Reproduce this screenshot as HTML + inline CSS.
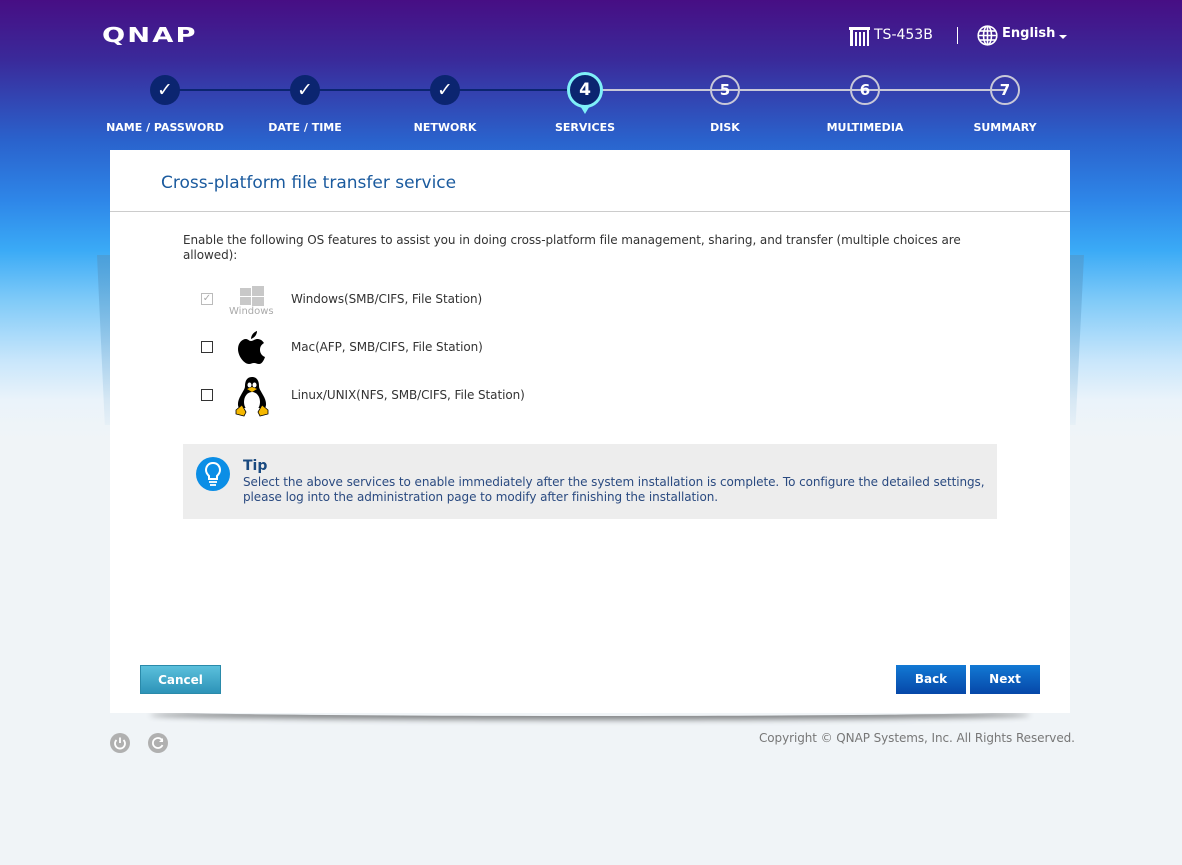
<!DOCTYPE html>
<html><head><meta charset="utf-8"><style>
*{margin:0;padding:0;box-sizing:border-box}
body{width:1182px;height:865px;overflow:hidden;font-family:"DejaVu Sans","Liberation Sans",sans-serif;position:relative;
background:linear-gradient(to bottom,#470e84 0px,#3a2a9a 60px,#2a62cc 140px,#2e86e8 200px,#3aaaf6 250px,#7fcaf8 300px,#c8e6fb 360px,#eaf3fa 400px,#f0f4f7 440px,#f0f4f7 100%);}
.abs{position:absolute}
.logo{left:102px;top:24px;color:#fff;font:900 26px "DejaVu Sans",sans-serif;letter-spacing:2px;transform:scale(1.05,0.78);transform-origin:top left}
.top{color:#fff;font-size:14px}
.line{height:2px;top:89px}
.c{width:30px;height:30px;border-radius:50%;top:75px;color:#fff;font:bold 15px "DejaVu Sans",sans-serif;text-align:center;line-height:30px}
.done{background:#0b2570;font-size:19px}
.fut{border:2px solid #c8c8d8;line-height:26px;background:transparent}
.lab{top:121px;color:#fff;font:bold 11px "DejaVu Sans",sans-serif;width:160px;text-align:center}
.card{left:110px;top:150px;width:960px;height:563px;background:#fff}
.side{background:linear-gradient(to bottom,rgba(80,150,200,.6),rgba(200,225,240,.2))}
.btn{height:29px;color:#fff;font:bold 12px "DejaVu Sans",sans-serif;text-align:center;line-height:29px}
.cb{width:12px;height:12px;border:1px solid #333;background:#fff}
.txt{font-size:12px;color:#333;letter-spacing:-0.08px}
</style></head><body>
<div class="abs side" style="left:97px;top:255px;width:13px;height:170px;clip-path:polygon(0 0,100% 0,100% 100%,60% 100%)"></div>
<div class="abs side" style="left:1070px;top:255px;width:14px;height:170px;clip-path:polygon(0 0,100% 0,40% 100%,0 100%)"></div>
<div class="abs logo">QNAP</div>
<svg class="abs" style="left:849px;top:27px" width="21" height="19" viewBox="0 0 21 19"><rect x="0" y="0" width="21" height="3" fill="#fff"/><rect x="1" y="3" width="3" height="16" fill="#fff"/><rect x="6" y="5" width="2" height="14" fill="#fff"/><rect x="10" y="5" width="2" height="14" fill="#fff"/><rect x="14" y="5" width="2" height="14" fill="#fff"/><rect x="18" y="3" width="2" height="16" fill="#fff"/></svg>
<div class="abs top" style="left:874px;top:27px">TS-453B</div>
<div class="abs" style="left:957px;top:27px;width:1px;height:17px;background:#fff"></div>
<svg class="abs" style="left:977px;top:25px" width="21" height="21" viewBox="0 0 21 21" fill="none" stroke="#fff" stroke-width="1.6"><circle cx="10.5" cy="10.5" r="9.3"/><ellipse cx="10.5" cy="10.5" rx="4" ry="9.3"/><line x1="1" y1="10.5" x2="20" y2="10.5"/><line x1="2.5" y1="6" x2="18.5" y2="6"/><line x1="2.5" y1="15" x2="18.5" y2="15"/><line x1="10.5" y1="1" x2="10.5" y2="20"/></svg>
<div class="abs top" style="left:1002px;top:26px;font-weight:bold;font-size:13px">English</div>
<div class="abs" style="left:1059px;top:35px;border:4px solid transparent;border-top:4px solid #fff;border-bottom:0"></div>

<div class="abs line" style="left:165px;width:420px;background:#0b2570"></div>
<div class="abs line" style="left:600px;width:405px;background:#c8c8d8"></div>
<div class="abs c done" style="left:150px">✓</div>
<div class="abs c done" style="left:290px">✓</div>
<div class="abs c done" style="left:430px">✓</div>
<div class="abs" style="left:576px;top:99px;width:18px;height:15px;background:#7ff0f8;clip-path:polygon(0 0,100% 0,50% 100%)"></div>
<div class="abs c" style="left:567px;top:72px;width:36px;height:36px;background:#0b2570;border:3px solid #7ff0f8;line-height:30px;font-size:17px">4</div>
<div class="abs c fut" style="left:710px">5</div>
<div class="abs c fut" style="left:850px">6</div>
<div class="abs c fut" style="left:990px">7</div>
<div class="abs lab" style="left:85px">NAME / PASSWORD</div>
<div class="abs lab" style="left:225px">DATE / TIME</div>
<div class="abs lab" style="left:365px">NETWORK</div>
<div class="abs lab" style="left:505px">SERVICES</div>
<div class="abs lab" style="left:645px">DISK</div>
<div class="abs lab" style="left:785px">MULTIMEDIA</div>
<div class="abs lab" style="left:925px">SUMMARY</div>

<div class="abs" style="left:150px;top:706px;width:880px;height:10px;box-shadow:0 4px 6px rgba(0,0,0,.45);border-radius:50%"></div>
<div class="abs card"></div>
<div class="abs" style="left:161px;top:173px;font-size:17px;color:#1a5a9e">Cross-platform file transfer service</div>
<div class="abs" style="left:110px;top:211px;width:960px;height:1px;background:#ccc"></div>
<div class="abs txt" style="left:183px;top:233px;width:800px;line-height:15px">Enable the following OS features to assist you in doing cross-platform file management, sharing, and transfer (multiple choices are allowed):</div>

<div class="abs cb" style="left:201px;top:293px;border-color:#bbb;color:#aaa;font-size:10px;line-height:10px;text-align:center">✓</div>
<svg class="abs" style="left:240px;top:286px" width="24" height="20" viewBox="0 0 24 20" fill="#c8c8c8"><rect x="0" y="2" width="11" height="8"/><rect x="12" y="0" width="12" height="10"/><rect x="0" y="11" width="11" height="8"/><rect x="12" y="11" width="12" height="9"/></svg>
<div class="abs" style="left:229px;top:306px;font-size:10px;color:#aaa">Windows</div>
<div class="abs txt" style="left:291px;top:292px">Windows(SMB/CIFS, File Station)</div>

<div class="abs cb" style="left:201px;top:341px"></div>
<svg class="abs" style="left:236px;top:331px" width="30" height="34" viewBox="0 0 30 34"><path d="M15 10c2-0 4-2 6-2 3 0 5 1 7 4-3 2-4 4-4 7 0 3 2 6 5 7-1 3-3 7-6 7-2 0-3-1-5-1s-3 1-5 1C8 33 2 25 2 18 2 12 6 8 10 8c2 0 3 2 5 2z" fill="#000"/><path d="M15 8c0-4 3-7 6-8 0 4-3 7-6 8z" fill="#000"/></svg>
<div class="abs txt" style="left:291px;top:340px">Mac(AFP, SMB/CIFS, File Station)</div>

<div class="abs cb" style="left:201px;top:389px"></div>
<svg class="abs" style="left:234px;top:376px" width="36" height="41" viewBox="0 0 36 41"><path d="M18 1c-5 0-7 4-7 9 0 3-2 5-4 9-3 5-4 10-2 13l26 0c2-3 1-8-2-13-2-4-4-6-4-9 0-5-2-9-7-9z" fill="#000"/><ellipse cx="18" cy="26" rx="8" ry="10" fill="#fff"/><ellipse cx="15.5" cy="9" rx="2" ry="2.5" fill="#fff"/><ellipse cx="20.5" cy="9" rx="2" ry="2.5" fill="#fff"/><path d="M13 13l5-2 5 2-5 3z" fill="#f5b800"/><path d="M2 34l6-5 4 7-2 4-8-2z" fill="#f5b800" stroke="#000" stroke-width=".8"/><path d="M34 34l-6-5-4 7 2 4 8-2z" fill="#f5b800" stroke="#000" stroke-width=".8"/></svg>
<div class="abs txt" style="left:291px;top:388px">Linux/UNIX(NFS, SMB/CIFS, File Station)</div>

<div class="abs" style="left:183px;top:444px;width:814px;height:75px;background:#ededed"></div>
<svg class="abs" style="left:196px;top:457px" width="34" height="34" viewBox="0 0 34 34"><circle cx="17" cy="17" r="17" fill="#0b8ee6"/><path d="M17 6c-5 0-7 4-7 7 0 3 2 5 3 6v3h8v-3c1-1 3-3 3-6 0-3-2-7-7-7z" fill="none" stroke="#fff" stroke-width="2"/><line x1="13" y1="25" x2="21" y2="25" stroke="#fff" stroke-width="1.8"/><line x1="14" y1="28" x2="20" y2="28" stroke="#fff" stroke-width="1.8"/></svg>
<div class="abs" style="left:243px;top:458px;font:bold 14px 'DejaVu Sans',sans-serif;color:#1a4a80">Tip</div>
<div class="abs txt" style="left:243px;top:475px;width:750px;line-height:15px;color:#2a4a80">Select the above services to enable immediately after the system installation is complete. To configure the detailed settings, please log into the administration page to modify after finishing the installation.</div>

<div class="abs btn" style="left:140px;top:665px;width:81px;background:linear-gradient(#5bc0dc,#2d93b8);border:1px solid #2a8aaa">Cancel</div>
<div class="abs btn" style="left:896px;top:665px;width:70px;background:linear-gradient(#1279d4,#0647a8)">Back</div>
<div class="abs btn" style="left:970px;top:665px;width:70px;background:linear-gradient(#1279d4,#0647a8)">Next</div>

<svg class="abs" style="left:110px;top:733px" width="20" height="20" viewBox="0 0 20 20"><circle cx="10" cy="10" r="10" fill="#b0b0b0"/><path d="M6.5 7a5 5 0 1 0 7 0" fill="none" stroke="#fff" stroke-width="1.8"/><line x1="10" y1="4.5" x2="10" y2="10" stroke="#fff" stroke-width="1.8"/></svg>
<svg class="abs" style="left:148px;top:733px" width="20" height="20" viewBox="0 0 20 20"><circle cx="10" cy="10" r="10" fill="#b0b0b0"/><path d="M14.5 8a5 5 0 1 0 0 4" fill="none" stroke="#fff" stroke-width="1.8"/><path d="M15 5v4h-4z" fill="#fff"/></svg>
<div class="abs txt" style="left:759px;top:731px;color:#777">Copyright © QNAP Systems, Inc. All Rights Reserved.</div>
</body></html>
